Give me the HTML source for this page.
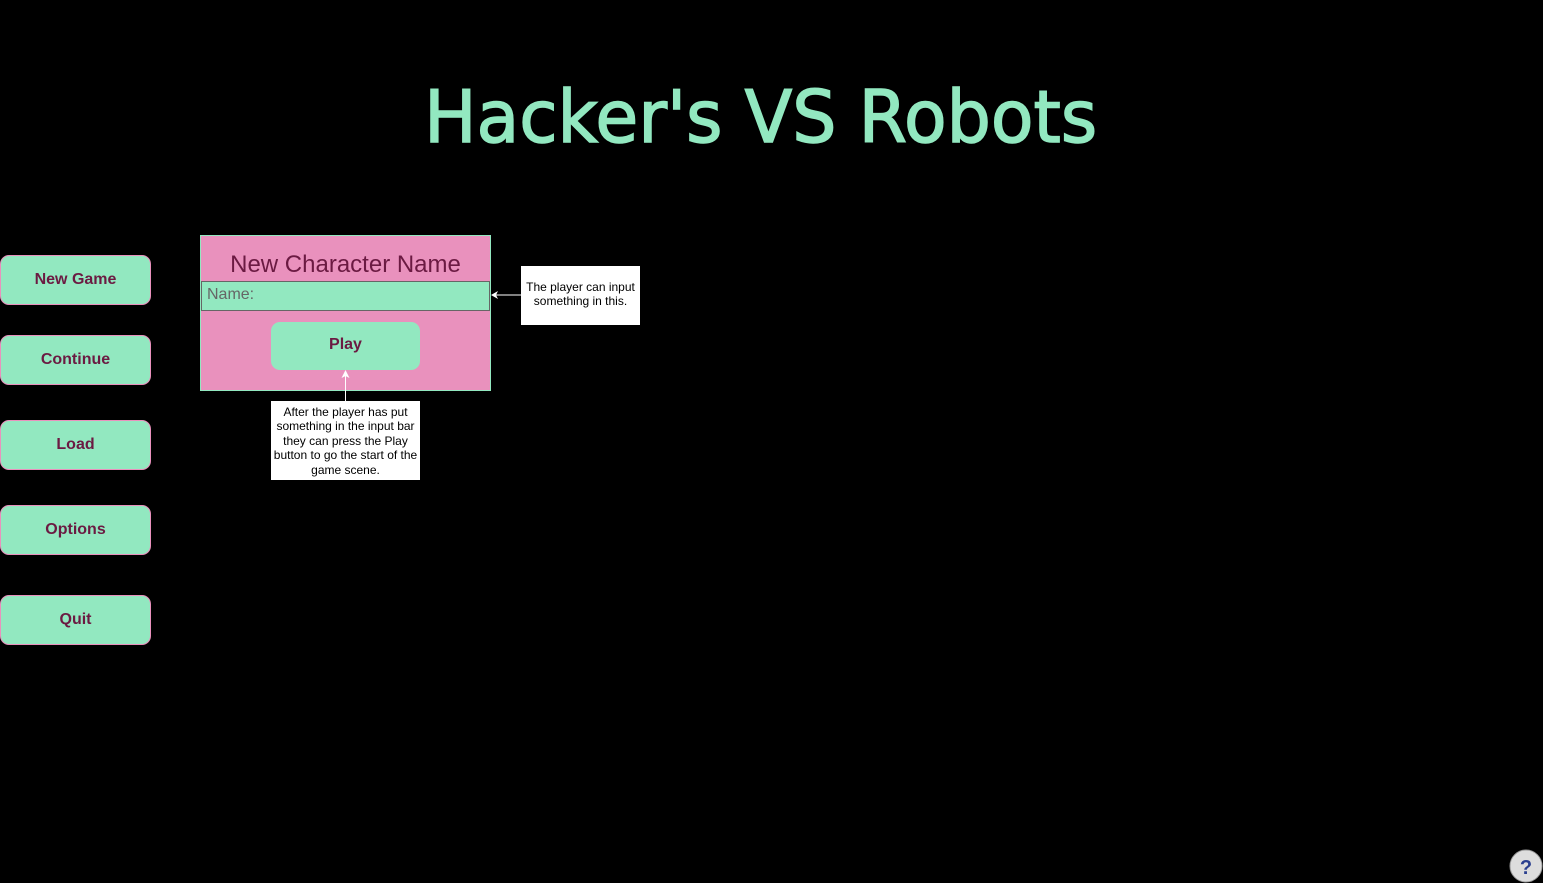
<!DOCTYPE html>
<html><head><style>
body{margin:0;width:1543px;height:883px;background:#000;position:relative;overflow:hidden;font-family:"Liberation Sans",sans-serif}
.t{position:absolute;left:400px;top:72px;width:722px;height:90px;color:#92e8c0;font-family:"DejaVu Sans",sans-serif;font-size:72px;line-height:90px;white-space:nowrap;text-align:center;-webkit-text-stroke:1.5px #92e8c0}
.b{position:absolute;left:0;width:149px;height:48px;background:#92e8c0;border:1px solid #e991bd;border-radius:9px;color:#6b1a42;font-weight:bold;font-size:16px;line-height:48px;text-align:center}
.box{position:absolute;left:200px;top:235px;width:289px;height:154px;background:#e991bd;border:1px solid #92e8c0}
.note{position:absolute;background:#fff;color:#000;font-size:12px;text-align:center;line-height:14.4px}
</style></head><body>
<div class="t"><span style="display:inline-block;transform:scaleX(0.968)">Hacker's VS Robots</span></div>
<div class="b" style="top:255px">New Game</div>
<div class="b" style="top:335px">Continue</div>
<div class="b" style="top:420px">Load</div>
<div class="b" style="top:505px">Options</div>
<div class="b" style="top:595px">Quit</div>
<div class="box">
<div style="position:absolute;left:0;top:15px;width:289px;text-align:center;color:#6b1a42;font-size:24px">New Character Name</div>
<div style="position:absolute;left:0;top:45px;height:28px;background:#92e8c0;border:1px solid #666;color:#666;font-size:16px;line-height:26px;padding-left:5px;width:282px">Name:</div>
<div style="position:absolute;left:70px;top:86px;width:149px;height:48px;background:#92e8c0;border-radius:9px;color:#6b1a42;font-weight:bold;font-size:16px;line-height:46px;text-align:center">Play</div>
</div>
<div class="note" style="left:521px;top:266px;width:119px;height:59px;padding-top:14px;box-sizing:border-box">The player can input something in this.</div>
<div class="note" style="left:271px;top:401px;width:149px;height:79px;padding-top:4px;box-sizing:border-box">After the player has put something in the input bar they can press the Play button to go the start of the game scene.</div>
<svg style="position:absolute;left:0;top:0" width="1543" height="883">
<line x1="521" y1="295" x2="496" y2="295" stroke="#fff" stroke-width="1"/>
<path d="M491 295 L498 291 L496 295 L498 299Z" fill="#fff"/>
<line x1="345.5" y1="401" x2="345.5" y2="376" stroke="#fff" stroke-width="1"/>
<path d="M345.5 370 L349.5 378 L345.5 376 L341.5 378Z" fill="#fff"/>
<circle cx="1526" cy="866" r="16" fill="#ddd" stroke="#999"/>
<text x="1526" y="874" text-anchor="middle" font-family="Liberation Sans" font-weight="bold" font-size="20" fill="#2a3f8f">?</text>
</svg>
</body></html>
